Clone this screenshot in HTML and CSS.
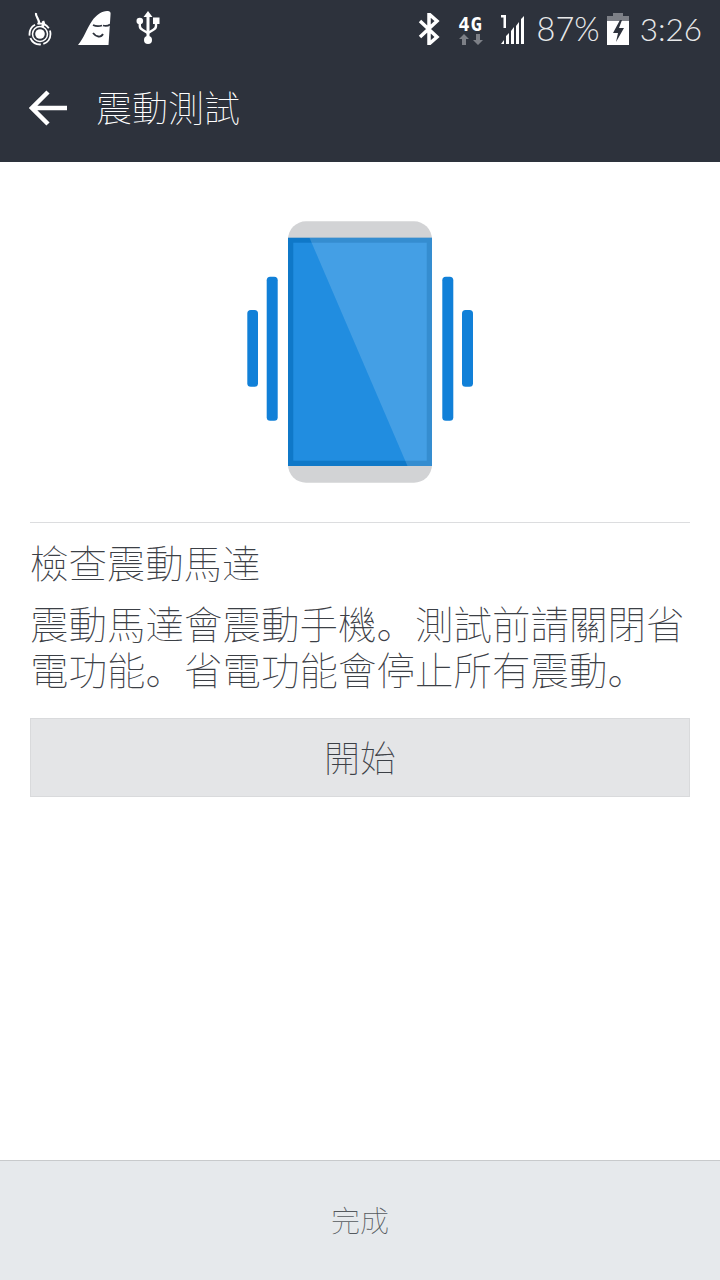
FILE: index.html
```html
<!DOCTYPE html>
<html lang="zh">
<head>
<meta charset="utf-8">
<title>震動測試</title>
<link rel="stylesheet" href="styles.css">
</head>
<body>
<div class="screen">
  <header class="header">
    <div class="status">
      <div class="status-left">
        <svg class="ic-flame" width="26" height="34" viewBox="0 0 26 34">
          <path d="M9 1c-1 4 4 6 3 11" fill="none" stroke="#fff" stroke-width="2.200"/>
          <path d="M16 9c1 2 1 4-1 6" fill="none" stroke="#fff" stroke-width="2.600"/>
          <circle cx="13" cy="22" r="4.800" fill="#fff"/>
          <circle cx="13" cy="22" r="7.500" fill="none" stroke="#fff" stroke-width="1.500"/>
          <circle cx="13" cy="22" r="10.500" fill="none" stroke="#fff" stroke-width="1.800" stroke-dasharray="13 2.500"/>
        </svg>
        <svg class="ic-ghost" width="34" height="36" viewBox="0 0 34 36">
          <path d="M0 35C6 28 9 18 14 11 18 5 24 1 29 1 32 1 33 2 32.500 5L30.500 35Z" fill="#fff"/>
          <path d="M15 15c3 1.500 6 1.500 9 .5M25 15.500c2 .5 5 .5 7-1" fill="none" stroke="#2d323c" stroke-width="1.800"/>
          <path d="M15 23c3 4 8 5 10 1" fill="none" stroke="#2d323c" stroke-width="1.800"/>
        </svg>
        <svg class="ic-usb" width="24" height="34" viewBox="0 0 24 34">
          <path d="M12 0l4.500 6h-3v20h-3V6h-3z" fill="#fff"/>
          <circle cx="12" cy="29" r="4" fill="#fff"/>
          <circle cx="3.800" cy="10" r="3.300" fill="#fff"/>
          <rect x="17" y="6.500" width="6.500" height="6.500" fill="#fff"/>
          <path d="M3.800 12v3c0 2 1 3 3 4l5 3M20 12v3c0 2-1 3-3 4l-5 3" fill="none" stroke="#fff" stroke-width="2.400"/>
        </svg>
      </div>
      <div class="status-right">
        <svg class="ic-bt" width="22" height="32" viewBox="0 0 22 32">
          <path d="M2 8l17 16-8 7V1l8 7L2 24" fill="none" stroke="#fff" stroke-width="3.500"/>
        </svg>
        <div class="net">
          <span class="net-label">4G</span>
          <svg width="24" height="11" viewBox="0 0 24 11">
            <path d="M5 0l5 5H7v6H3V5H0zM19 11l5-5h-3V0h-4v6h-3z" fill="#7d8087"/>
          </svg>
        </div>
        <svg class="ic-signal" width="28" height="32" viewBox="0 0 28 32">
          <path d="M4 1h5v13H6.500V3.500H4z" fill="#fff"/>
          <path d="M0 30l3-4v4zM5 30v-8l3-3v11zM10 30V17l3-4v17zM15 30V12l3-4v22zM20 30V5l3-3v28z" fill="#fff" transform="translate(4 0)"/>
        </svg>
        <span class="pct">87%</span>
        <svg class="ic-batt" width="22" height="32" viewBox="0 0 22 32">
          <rect x="6" y="0" width="10" height="3" fill="#7d8087"/>
          <rect x="0" y="3" width="22" height="8" fill="#7d8087"/>
          <path d="M0 8h22v24H0z" fill="#fff"/>
          <path d="M13 7L6 20h5l-2 9 8-14h-5l3-8z" fill="#2d323c"/>
        </svg>
        <span class="time">3:26</span>
      </div>
    </div>
    <div class="toolbar">
      <svg class="back" width="40" height="40" viewBox="0 0 40 40">
        <path d="M38 20H4M19 4L3 20l16 16" fill="none" stroke="#fff" stroke-width="4.500"/>
      </svg>
      <h1 class="title">震動測試</h1>
    </div>
  </header>
  <main class="content">
    <div class="art">
      <svg width="226" height="262" viewBox="0 0 226 262">
        <rect x="0.300" y="89" width="10.700" height="76.700" rx="3.500" fill="#1180d8"/>
        <rect x="19.700" y="55.700" width="11" height="144" rx="3.500" fill="#1180d8"/>
        <rect x="195.300" y="55.700" width="11" height="144" rx="3.500" fill="#1180d8"/>
        <rect x="215" y="89" width="11" height="76.700" rx="3.500" fill="#1180d8"/>
        <rect x="41" y="0.300" width="144" height="261.400" rx="18" fill="#d2d3d5"/>
        <rect x="41" y="16.700" width="144" height="228.300" fill="#0f78c8"/>
        <rect x="46.300" y="21.700" width="133.400" height="218" fill="#218de0"/>
        <path d="M62.500 16.700H185V245H160.500Z" fill="#fff" fill-opacity=".16"/>
      </svg>
    </div>
    <hr class="rule">
    <h2 class="heading">檢查震動馬達</h2>
    <p class="desc">震動馬達會震動手機。測試前請關閉省電功能。省電功能會停止所有震動。</p>
    <button class="start" type="button">開始</button>
  </main>
  <footer class="footer">完成</footer>
</div>
</body>
</html>
```
FILE: styles.css
```css
* { box-sizing: border-box; }
html, body { margin: 0; padding: 0; }
body {
  width: 720px;
  height: 1280px;
  background: #fff;
  font-family: "Noto Sans CJK SC", "Noto Sans CJK TC", "Liberation Sans", sans-serif;
  font-weight: 100;
  overflow: hidden;
}
.screen {
  display: flex;
  flex-direction: column;
  height: 1280px;
}
.header {
  background: #2d323c;
  height: 162px;
  color: #fff;
  flex: none;
}
.status {
  height: 58px;
  display: flex;
  justify-content: space-between;
  align-items: center;
  padding: 0 18px 0 27px;
}
.status-left {
  display: flex;
  align-items: center;
}
.ic-flame { margin-right: 25px; margin-top: 0; }
.ic-ghost { margin-right: 24px; margin-top: -2px; }
.ic-usb { margin-top: -3px; }
.status-right {
  display: flex;
  align-items: center;
  font-family: Lato, "Liberation Sans", sans-serif;
  font-weight: 300;
}
.ic-bt { margin-right: 18px; }
.net {
  display: flex;
  flex-direction: column;
  align-items: center;
  width: 26px;
  margin-right: 13px;
  margin-top: 1px;
}
.net-label {
  font: 700 19px/20px "DejaVu Sans Mono", monospace;
  letter-spacing: 1px;
}
.ic-signal { margin-right: 12px; margin-top: 1px; }
.pct { font-size: 32.500px; line-height: 40px; margin-right: 7px; color: #e8e9ea; }
.ic-batt { margin-right: 11px; }
.time { font-size: 31.500px; line-height: 40px; color: #e8e9ea; }
.toolbar {
  height: 104px;
  display: flex;
  align-items: center;
  padding: 0 0 4px 29px;
}
.back { flex: none; }
.title {
  margin: 0 0 4px 27px;
  font-size: 36px;
  font-weight: 100;
  line-height: 50px;
  color: #fff;
}
.content {
  flex: 1;
  padding: 0 30px;
  display: flex;
  flex-direction: column;
}
.art {
  display: flex;
  justify-content: center;
  padding-top: 59px;
  height: 360px;
  margin: 0 -30px;
}
.art svg { display: block; }
.rule {
  margin: 0;
  border: 0;
  height: 1px;
  background: #dcdddf;
}
.heading {
  margin: 13px 0 0;
  font-size: 38.400px;
  font-weight: 100;
  line-height: 50px;
  color: #3c4046;
}
.desc {
  margin: 13px 0 0;
  font-size: 38.500px;
  line-height: 46px;
  color: #3c4046;
}
.start {
  margin-top: 27px;
  height: 79px;
  background: #e4e5e7;
  border: 1px solid #d9dadc;
  font: inherit;
  font-size: 36px;
  color: #3c4046;
  padding: 0 0 4px;
}
.footer {
  flex: none;
  height: 120px;
  background: #e6e9ec;
  border-top: 1px solid #c8cacc;
  display: flex;
  align-items: center;
  justify-content: center;
  font-size: 29px;
  color: #55595e;
  padding-bottom: 4px;
}
```
